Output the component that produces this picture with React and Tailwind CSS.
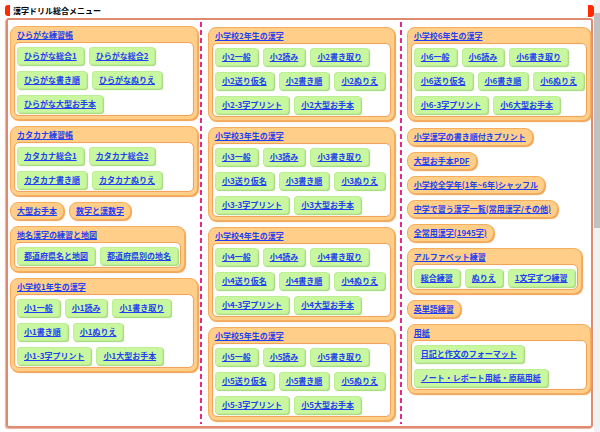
import React from "react";

const font = { fontFamily: '"Noto Sans CJK JP", "Noto Sans", sans-serif' };

const kanaGroup = {
  hira: [
    ["ひらがな総合1", "ひらがな総合2"],
    ["ひらがな書き順", "ひらがなぬりえ"],
    ["ひらがな大型お手本"],
  ],
  kata: [
    ["カタカナ総合1", "カタカナ総合2"],
    ["カタカナ書き順", "カタカナぬりえ"],
  ],
};

// rows for a grade (小1 has no 送り仮名)
const gradeRows = (n) =>
  n === 1
    ? [
        [`小${n}一般`, `小${n}読み`, `小${n}書き取り`],
        [`小${n}書き順`, `小${n}ぬりえ`],
        [`小${n}-3字プリント`, `小${n}大型お手本`],
      ]
    : [
        [`小${n}一般`, `小${n}読み`, `小${n}書き取り`],
        [`小${n}送り仮名`, `小${n}書き順`, `小${n}ぬりえ`],
        [`小${n}-3字プリント`, `小${n}大型お手本`],
      ];

const linkText = "text-[8px] font-bold text-[#1f3ff0] underline whitespace-nowrap";

const Btn = ({ label }) => (
  <a
    href="#"
    className={`h-[18px] px-[6px] flex items-center bg-[#c9f7a0] border border-[#bdf095] rounded-[3px] shadow-[1px_1px_1px_#a3d878] ${linkText}`}
  >
    {label}
  </a>
);

const Pill = ({ label, className = "" }) => (
  <a
    href="#"
    className={`h-[18px] px-[6px] w-fit flex items-center bg-[#ffcf8a] border border-[#f6ad5e] rounded-[8px] shadow-[1px_1px_1px_#f0a050] ${linkText} ${className}`}
  >
    {label}
  </a>
);

const Group = ({ title, rows, className = "" }) => (
  <div
    className={`bg-[#ffcf8a] border border-[#f6ad5e] rounded-[8px] shadow-[1px_1px_1px_#f0a050] px-[3px] pt-[2px] pb-[3px] ${className}`}
  >
    <div className="h-[12px] flex items-center pl-[3px]">
      <a href="#" className={linkText}>
        {title}
      </a>
    </div>
    <div className="mt-[1px] bg-white border border-[#f3a35a] rounded-[5px] shadow-[inset_0_0_1px_#f3c090] px-[2px] pt-[4px] pb-[2px] flex flex-col gap-[6px]">
      {rows.map((row, i) => (
        <div key={i} className="flex gap-[5px]">
          {row.map((b) => (
            <Btn key={b} label={b} />
          ))}
        </div>
      ))}
    </div>
  </div>
);

const Divider = () => (
  <div className="w-[2px] my-[2px] bg-[repeating-linear-gradient(to_bottom,#e0288f_0px,#e0288f_5px,transparent_5px,transparent_8px)]" />
);

export default function App() {
  return (
    <div className="w-[600px] h-[432px] flex bg-white overflow-hidden" style={font}>
      <div className="w-[594px] flex flex-col">
        {/* title bar */}
        <div className="h-[18px] pt-[5px] pl-[5px] flex items-start justify-between">
          <div className="flex items-center">
            <div className="w-[5px] h-[11px] bg-[#ff2a00] rounded-l-[3px]" />
            <span className="ml-[3px] text-[8px] leading-[11px] font-bold text-black">
              漢字ドリル総合メニュー
            </span>
          </div>
          <div className="w-[6px] h-[12px] bg-[#ff2a00] rounded-r-[3px]" />
        </div>

        {/* frame */}
        <div className="ml-[6px] w-[587px] h-[410px] border-2 border-[#dd8a6e] rounded-[3px] shadow-[-1px_1px_1px_#e8b0a0] flex">
          {/* column 1 */}
          <div className="ml-[2px] w-[188px] pt-[6px] flex flex-col gap-[6px]">
            <Group title="ひらがな練習帳" rows={kanaGroup.hira} />
            <Group title="カタカナ練習帳" rows={kanaGroup.kata} />
            <div className="flex gap-[5px]">
              <Pill label="大型お手本" />
              <Pill label="数字と漢数字" />
            </div>
            <Group
              title="地名漢字の練習と地図"
              rows={[["都道府県名と地図", "都道府県別の地名"]]}
              className="w-fit"
            />
            <Group title="小学校1年生の漢字" rows={gradeRows(1)} />
          </div>

          <div className="w-[2px]" />
          <Divider />

          {/* column 2 */}
          <div className="ml-[6px] w-[187px] pt-[7px] flex flex-col gap-[6px]">
            {[2, 3, 4, 5].map((n) => (
              <Group key={n} title={`小学校${n}年生の漢字`} rows={gradeRows(n)} />
            ))}
          </div>

          <div className="w-[5px]" />
          <Divider />

          {/* column 3 */}
          <div className="ml-[5px] flex-1 pt-[7px] flex flex-col gap-[6px]">
            <Group title="小学校6年生の漢字" rows={gradeRows(6)} />
            <Pill label="小学漢字の書き順付きプリント" className="mt-[1px]" />
            <Pill label="大型お手本PDF" />
            <Pill label="小学校全学年(1年~6年)シャッフル" />
            <Pill label="中学で習う漢字一覧(常用漢字/その他)" />
            <Pill label="全常用漢字(1945字)" />
            <Group
              title="アルファベット練習"
              rows={[["総合練習", "ぬりえ", "1文字ずつ練習"]]}
              className="w-fit"
            />
            <Pill label="英単語練習" />
            <Group
              title="用紙"
              rows={[["日記と作文のフォーマット"], ["ノート・レポート用紙・原稿用紙"]]}
            />
          </div>
        </div>
      </div>

      {/* scrollbar */}
      <div className="w-[6px] bg-[#f1f1f1] flex flex-col">
        <div className="mt-[13px] h-[215px] bg-[#c1c1c1]" />
      </div>
    </div>
  );
}
